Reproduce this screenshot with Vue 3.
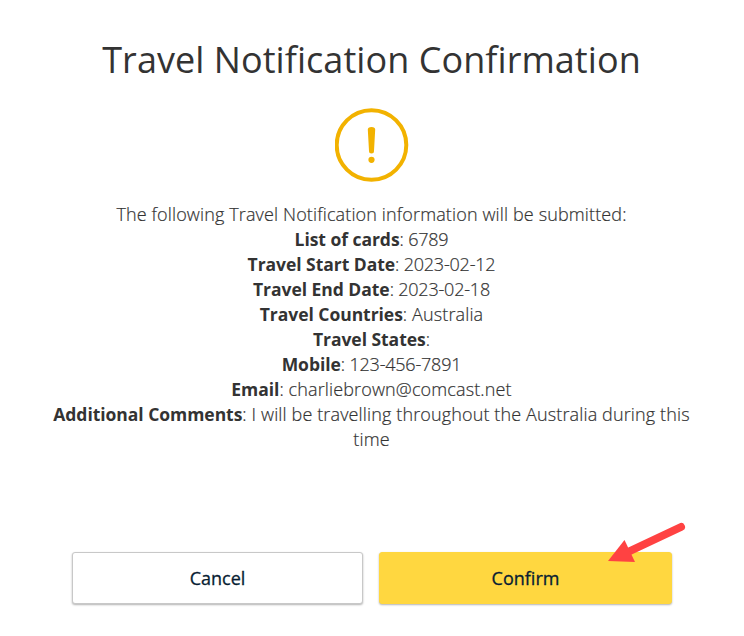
<script setup>
const title = "Travel Notification Confirmation";
const intro = "The following Travel Notification information will be submitted:";

const details = [
  { label: "List of cards", value: "6789", numeric: true },
  { label: "Travel Start Date", value: "2023-02-12", numeric: true },
  { label: "Travel End Date", value: "2023-02-18", numeric: true },
  { label: "Travel Countries", value: "Australia" },
  { label: "Travel States", value: "" },
  { label: "Mobile", value: "123-456-7891", numeric: true },
  { label: "Email", value: "charliebrown@comcast.net" },
  {
    label: "Additional Comments",
    value: "I will be travelling throughout the Australia during this time",
  },
];
</script>

<template>
  <main class="confirmation">
    <h1 class="confirmation__title">
      {{ title }}
    </h1>

    <svg
      class="confirmation__icon"
      viewBox="0 0 74 74"
      aria-hidden="true"
    >
      <circle
        cx="36.5"
        cy="37"
        r="34.8"
        fill="none"
        stroke="#f2b200"
        stroke-width="4"
      />
      <path
        d="M32.8 21.5q0-2.6 3.7-2.6t3.7 2.6L39 43a2.5 2.5 0 0 1-5 0z"
        fill="#f2b200"
      />
      <circle
        cx="36.5"
        cy="51.8"
        r="3.1"
        fill="#f2b200"
      />
    </svg>

    <div class="confirmation__details">
      <p>{{ intro }}</p>
      <p
        v-for="item in details"
        :key="item.label"
        :class="{ 'confirmation__row--numeric': item.numeric }"
      >
        <strong>{{ item.label }}</strong>: {{ item.value }}
      </p>
    </div>

    <div class="confirmation__actions">
      <button
        type="button"
        class="button"
      >
        Cancel
      </button>
      <button
        type="button"
        class="button button--primary"
      >
        Confirm
      </button>
      <svg
        class="confirmation__arrow"
        viewBox="0 0 80 42"
        aria-hidden="true"
      >
        <path
          d="M75 6L24 30"
          fill="none"
          stroke="#ff4242"
          stroke-width="8"
          stroke-linecap="round"
        />
        <path
          d="M2 40L18.5 19L29 41z"
          fill="#ff4242"
        />
      </svg>
    </div>
  </main>
</template>

<style>
body {
  margin: 0;
  background: #fff;
}
</style>

<style scoped>
.confirmation {
  box-sizing: border-box;
  display: flex;
  flex-direction: column;
  align-items: center;
  width: 743px;
  height: 636px;
  padding-top: 35px;
  overflow: hidden;
  color: #333;
  font-family: "Open Sans", sans-serif;
}

.confirmation__title {
  margin: 0;
  font-size: 36px;
  font-weight: 400;
  letter-spacing: 0.06px;
  line-height: 50px;
}

.confirmation__icon {
  width: 74px;
  height: 74px;
  margin-top: 23px;
}

.confirmation__details {
  width: 651px;
  height: 250px;
  margin-top: 20px;
  font-size: 18px;
  font-weight: 300;
  letter-spacing: 0.13px;
  line-height: 25px;
  text-align: center;
  -webkit-text-stroke: 0.2px #333;
}

.confirmation__details p {
  margin: 0;
}

.confirmation__details .confirmation__row--numeric {
  letter-spacing: -0.2px;
}

.confirmation__details strong {
  font-size: 17.5px;
  font-weight: 700;
  letter-spacing: -0.04px;
  -webkit-text-stroke: 0;
}

.confirmation__actions {
  position: relative;
  display: flex;
  gap: 16px;
  width: 600px;
  margin-top: 100px;
  margin-left: 1px;
}

.button {
  box-sizing: border-box;
  width: 291px;
  height: 52px;
  padding: 0;
  border: 1px solid #c8c8c8;
  border-radius: 3px;
  background: #fff;
  box-shadow: 0 1px 2px rgba(0, 0, 0, 0.3);
  color: #071d33;
  font: 500 18px "Open Sans", sans-serif;
  -webkit-text-stroke: 0.3px #071d33;
}

.button--primary {
  width: 293px;
  border-color: #ffd740;
  background: #ffd740;
}

.confirmation__arrow {
  position: absolute;
  top: -31px;
  right: -14px;
  width: 80px;
  height: 42px;
}
</style>
